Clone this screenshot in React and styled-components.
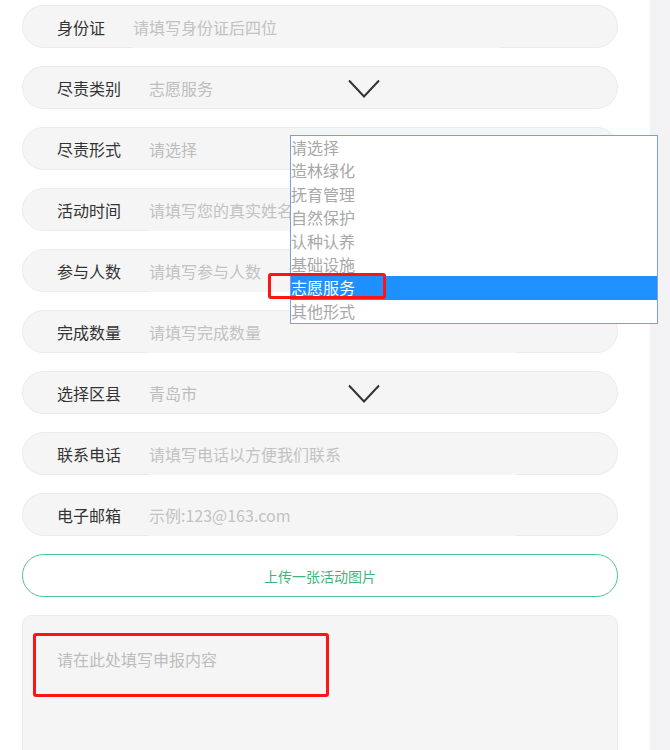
import React from "react";
import styled, { createGlobalStyle } from "styled-components";

const Global = createGlobalStyle`
  html, body { margin: 0; padding: 0; background: #fff; }
  body { font-family: "Noto Sans CJK SC", "Microsoft YaHei", "Noto Sans", sans-serif; }
  * { box-sizing: border-box; }
`;

const Page = styled.div`
  position: relative;
  display: flex;
  width: 670px;
  height: 750px;
  overflow: hidden;
`;

const Main = styled.div`
  flex: 0 0 650px;
  display: flex;
  flex-direction: column;
  gap: 18px;
  padding: 5px 32px 0 22px;
`;

const Strip = styled.div`
  flex: 1;
  background: #f3f3f5;
`;

const Row = styled.div`
  position: relative;
  display: flex;
  align-items: center;
  height: 43px;
  flex: 0 0 43px;
  background: #f5f5f5;
  border: 1px solid #ebebeb;
  border-radius: 22px;
  padding-left: 34px;
`;

const Label = styled.span`
  flex: 0 0 auto;
  margin-right: 28px;
  font-size: 16px;
  color: #333;
  line-height: 1;
`;

const TextInput = styled.input`
  align-self: flex-end;
  width: 367px;
  height: 42px;
  margin-bottom: -1px;
  border: none;
  outline: none;
  background: #f5f5f5;
  padding: 0;
  font-family: inherit;
  font-size: 16px;
  color: #333;
  &::placeholder { color: #c2c2c2; }
`;

const Select = styled.select`
  appearance: none;
  -webkit-appearance: none;
  border: none;
  outline: none;
  background: transparent;
  padding: 0;
  width: 367px;
  font-family: inherit;
  font-size: 16px;
  color: #bdbdbd;
`;

const Chevron = styled.svg`
  position: absolute;
  left: 325px;
  top: 12px;
  width: 32px;
  height: 19px;
  pointer-events: none;
`;

const UploadButton = styled.button`
  flex: 0 0 43px;
  height: 43px;
  width: 100%;
  border: 1.5px solid #4cc48e;
  border-radius: 22px;
  background: #fff;
  color: #3fb57e;
  font-family: inherit;
  font-size: 14px;
`;

const TextArea = styled.textarea`
  flex: 0 0 170px;
  width: 100%;
  resize: none;
  border: 1px solid #ebebeb;
  border-radius: 10px;
  background: #f5f5f5;
  padding: 31px 34px;
  font-family: inherit;
  font-size: 16px;
  line-height: 24px;
  outline: none;
  &::placeholder { color: #bdbdbd; }
`;

const Dropdown = styled.ul`
  position: absolute;
  left: 290px;
  top: 135px;
  width: 368px;
  margin: 0;
  padding: 0;
  list-style: none;
  background: #fff;
  border: 1px solid #7d9fdf;
`;

const Option = styled.li`
  height: 23.4px;
  line-height: 23.4px;
  padding-left: 0;
  font-size: 16px;
  color: ${(p) => (p.$active ? "#fff" : "#a8a8a8")};
  background: ${(p) => (p.$active ? "#1e90ff" : "transparent")};
`;

const Mark = styled.div`
  position: absolute;
  border: 3px solid #ff1414;
  border-radius: 3px;
  pointer-events: none;
`;

const ChevronIcon = () => (
  <Chevron viewBox="0 0 32 19">
    <polyline points="1,1.5 16,17.5 31,1.5" fill="none" stroke="#333" strokeWidth="2" />
  </Chevron>
);

const fields = [
  { label: "身份证", placeholder: "请填写身份证后四位" },
  { label: "尽责类别", select: "志愿服务", chevron: true },
  { label: "尽责形式", select: "请选择" },
  { label: "活动时间", placeholder: "请填写您的真实姓名" },
  { label: "参与人数", placeholder: "请填写参与人数" },
  { label: "完成数量", placeholder: "请填写完成数量" },
  { label: "选择区县", select: "青岛市", chevron: true },
  { label: "联系电话", placeholder: "请填写电话以方便我们联系" },
  { label: "电子邮箱", placeholder: "示例:123@163.com" },
];

const options = ["请选择", "造林绿化", "抚育管理", "自然保护", "认种认养", "基础设施", "志愿服务", "其他形式"];

export default function App() {
  return (
    <Page>
      <Global />
      <Main>
        {fields.map((f) => (
          <Row key={f.label}>
            <Label>{f.label}</Label>
            {f.select ? (
              <Select defaultValue={f.select}>
                <option>{f.select}</option>
              </Select>
            ) : (
              <TextInput placeholder={f.placeholder} />
            )}
            {f.chevron && <ChevronIcon />}
          </Row>
        ))}
        <UploadButton>上传一张活动图片</UploadButton>
        <TextArea placeholder="请在此处填写申报内容" />
      </Main>
      <Strip />
      <Dropdown>
        {options.map((o) => (
          <Option key={o} $active={o === "志愿服务"}>{o}</Option>
        ))}
      </Dropdown>
      <Mark style={{ left: 268, top: 273, width: 118, height: 26 }} />
      <Mark style={{ left: 33, top: 633, width: 296, height: 64 }} />
    </Page>
  );
}
